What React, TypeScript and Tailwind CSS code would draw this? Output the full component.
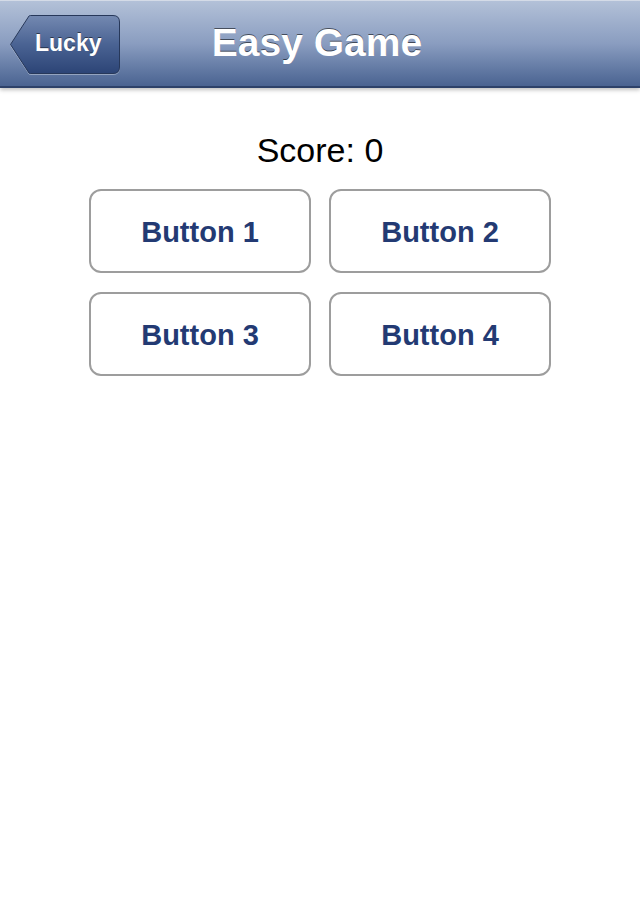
const buttons = ["Button 1", "Button 2", "Button 3", "Button 4"];

const BackButton = () => (
  <div className="absolute left-0 top-0 h-[86px] w-[130px]">
    <svg width="130" height="86" className="absolute left-0 top-0">
      <defs>
        <linearGradient id="backFill" x1="0" y1="0" x2="0" y2="1">
          <stop offset="0" stopColor="#7489b1" />
          <stop offset="0.5" stopColor="#4a6393" />
          <stop offset="1" stopColor="#2c4476" />
        </linearGradient>
      </defs>
      <path
        d="M10.5 43.5 L29 15 Q29.5 14.5 30.5 14.5 H113 Q119.5 14.5 119.5 21 V66 Q119.5 72.5 113 72.5 H30.5 Q29.5 72.5 29 72 Z"
        fill="none"
        stroke="rgba(255,255,255,0.35)"
        strokeWidth="1"
        transform="translate(0 1)"
      />
      <path
        d="M10.5 43.5 L29 15 Q29.5 14.5 30.5 14.5 H113 Q119.5 14.5 119.5 21 V66 Q119.5 72.5 113 72.5 H30.5 Q29.5 72.5 29 72 Z"
        fill="url(#backFill)"
        stroke="#27385a"
        strokeWidth="1"
      />
    </svg>
    <span className="absolute left-[35px] top-[28px] text-[23px] leading-[28px] font-bold text-white [text-shadow:0_-1px_0_rgba(0,0,0,0.5)]">
      Lucky
    </span>
  </div>
);

export default function App() {
  return (
    <div className="w-[640px] h-[920px] bg-white font-['Liberation_Sans',Arial,sans-serif]">
      <div className="relative h-[88px] bg-gradient-to-b from-[#b3c1d8] via-[#8a9dc0] to-[#4a6391] border-t border-[#d4dbe7] border-b-2 border-b-[#2d4169] shadow-[0_2px_4px_rgba(0,0,0,0.25)]">
        <BackButton />
        <div className="flex h-[85px] items-center justify-center">
          <h1 className="ml-[-6px] text-[39px] font-bold text-white [text-shadow:0_-1px_0_rgba(0,0,0,0.55)]">
            Easy Game
          </h1>
        </div>
      </div>

      <div className="flex flex-col items-center pt-[43px]">
        <p className="text-[34px] leading-[38px] text-black">Score: 0</p>
        <div className="mt-[20px] grid grid-cols-[222px_222px] gap-x-[18px] gap-y-[19px]">
          {buttons.map((label) => (
            <button
              key={label}
              className="h-[84px] rounded-[12px] border-2 border-[#9d9d9d] bg-white pt-[3px] text-[29px] font-bold text-[#233a73]"
            >
              {label}
            </button>
          ))}
        </div>
      </div>
    </div>
  );
}
